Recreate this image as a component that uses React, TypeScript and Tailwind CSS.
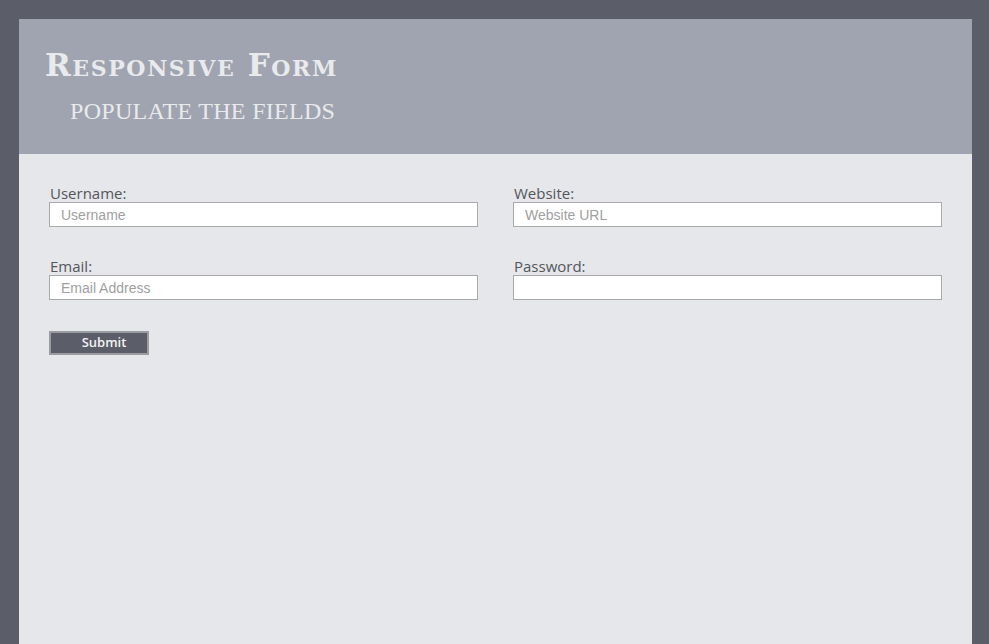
import React from "react";

const fields = [
  { label: "Username:", placeholder: "Username", type: "text" },
  { label: "Website:", placeholder: "Website URL", type: "text" },
  { label: "Email:", placeholder: "Email Address", type: "email" },
  { label: "Password:", placeholder: "", type: "password" },
];

const App = () => {
  return (
    <div className="min-h-screen bg-[#5b5e69] pl-[19px] pr-[17px] pt-[19px]">
      <div className="min-h-[625px] bg-[#e6e7ea]">
        <header className="h-[135px] bg-[#a0a4b0] pl-[26px] pt-[27px]">
          <h1
            className="text-[31px] leading-[38px] font-bold tracking-[1.6px] text-[#e9eaec] [font-variant:small-caps]"
            style={{ fontFamily: '"DejaVu Serif", serif' }}
          >
            Responsive Form
          </h1>
          <h2
            className="pl-[25px] pt-[12px] text-[24px] leading-[30px] tracking-[0.3px] uppercase text-[#e9eaec]"
            style={{ fontFamily: '"Liberation Serif", serif' }}
          >
            Populate the fields
          </h2>
        </header>
        <form className="px-[30px] pt-[30px]" onSubmit={(e) => e.preventDefault()}>
          <div className="grid grid-cols-2 gap-x-[35px] gap-y-[30px]">
            {fields.map((f) => (
              <div key={f.label} className="flex flex-col">
                <label
                  className="pl-px text-[15px] leading-[18px] text-[#53565b]"
                  style={{ fontFamily: '"Open Sans", sans-serif' }}
                >
                  {f.label}
                </label>
                <input
                  type={f.type}
                  placeholder={f.placeholder}
                  className="h-[25px] border border-[#a9a9a9] bg-white px-[11px] text-[14px] text-[#333] placeholder:text-[#a0a0a0] outline-none"
                  style={{ fontFamily: '"Liberation Sans", Arial, sans-serif' }}
                />
              </div>
            ))}
          </div>
          <button
            type="submit"
            className="mt-[31px] h-[24px] w-[100px] border-2 border-[#9a9ca2] bg-[#5b5e69] pl-[10px] text-[13px] font-semibold text-[#f2f2f2]"
            style={{ fontFamily: '"Open Sans", sans-serif' }}
          >
            Submit
          </button>
        </form>
      </div>
    </div>
  );
};

export default App;
